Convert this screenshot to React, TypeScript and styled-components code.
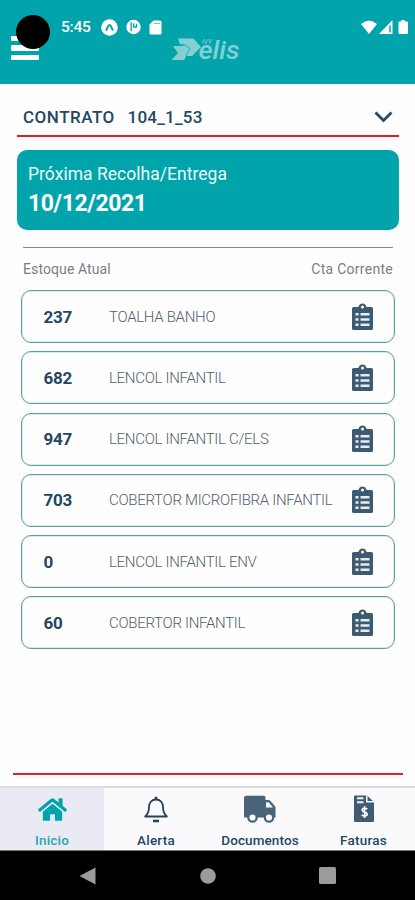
import React from "react";
import styled, { createGlobalStyle } from "styled-components";
import { FaHome } from "react-icons/fa";

const teal = "#02a4ac";
const navy = "#234762";

const GlobalStyle = createGlobalStyle`
  * { box-sizing: border-box; }
  body { margin: 0; background: #fff; font-family: Roboto, "Liberation Sans", sans-serif; }
  svg { display: block; flex: none; }
`;

const Screen = styled.div`
  width: 415px;
  height: 900px;
  display: flex;
  flex-direction: column;
  background: #fefefe;
  overflow: hidden;
`;

const Header = styled.header`
  position: relative;
  height: 84px;
  background: ${teal};
  flex: none;
`;

const CameraHole = styled.span`
  position: absolute;
  left: 16px;
  top: 15px;
  width: 34px;
  height: 34px;
  border-radius: 50%;
  background: #000;
`;

const StatusBar = styled.div`
  height: 36px;
  display: flex;
  align-items: center;
  padding: 18px 5px 0 61px;
`;

const Clock = styled.span`
  width: 40px;
  color: #fff;
  font-size: 15.5px;
  line-height: 18px;
  font-weight: 500;
  letter-spacing: -0.2px;
`;

const StatusIcons = styled.div`
  display: flex;
  align-items: center;
  gap: 8px;
  flex: 1;
`;

const SignalIcons = styled.div`
  display: flex;
  align-items: center;
  gap: 2px;
`;

const AppBar = styled.div`
  height: 48px;
  display: flex;
  padding-left: 11px;
`;

const MenuButton = styled.div`
  display: flex;
  flex-direction: column;
  gap: 4px;
  width: 160px;
`;

const MenuBar = styled.span`
  width: 28px;
  height: 5.4px;
  border-radius: 1px;
  background: #fff;
`;

const Content = styled.main`
  flex: 1;
  display: flex;
  flex-direction: column;
`;

const ContractSelect = styled.div`
  height: 53px;
  margin: 0 16px 0 17px;
  padding: 15px 6px 0 6px;
  border-bottom: 2px solid #e61f24;
  display: flex;
  align-items: center;
  color: ${navy};
`;

const ContractText = styled.span<{ $w: number; $ls: number }>`
  width: ${(p) => p.$w}px;
  white-space: nowrap;
  font-size: 17px;
  line-height: 20px;
  font-weight: 500;
  letter-spacing: ${(p) => p.$ls}px;
`;

const Card = styled.section`
  height: 80px;
  margin: 13px 16px 0 17px;
  padding: 13px 11px;
  border-radius: 10px;
  background: ${teal};
  color: #fff;
`;

const CardLabel = styled.div`
  font-size: 17.5px;
  line-height: 22px;
  color: #e9fafa;
  letter-spacing: 0.03px;
`;

const CardDate = styled.div`
  margin-top: 5px;
  font-size: 23px;
  line-height: 28px;
  font-weight: 700;
  letter-spacing: -0.4px;
`;

const Columns = styled.div`
  height: 43px;
  margin: 17px 22px 0 23px;
  padding-top: 11px;
  border-top: 1px solid #85898d;
  display: flex;
  justify-content: space-between;
  font-size: 14px;
  line-height: 20px;
  color: #788086;
`;

const ColumnTitle = styled.span<{ $ls: number }>`
  letter-spacing: ${(p) => p.$ls}px;
`;

const List = styled.div`
  display: flex;
  flex-direction: column;
  gap: 8.3px;
  padding: 0 20px 0 21px;
`;

const Row = styled.div`
  height: 53px;
  display: flex;
  align-items: center;
  padding: 0 21px 0 21.5px;
  border: 1px solid #5c9fa0;
  border-radius: 10px;
  box-shadow: inset 0 0 0 1px #dcebeb;
`;

const Quantity = styled.span`
  width: 65.5px;
  font-size: 17px;
  font-weight: 700;
  color: ${navy};
  letter-spacing: -0.25px;
`;

const ItemName = styled.span`
  flex: 1;
  white-space: nowrap;
  font-size: 15px;
  font-weight: 300;
  color: #51606c;
  letter-spacing: -0.3px;
`;

const Divider = styled.div`
  height: 2px;
  margin: auto 12px 11px 13px;
  background: #e02226;
`;

const Tabs = styled.nav`
  height: 65px;
  display: grid;
  grid-template-columns: 104px 104px 104px 103px;
  border-top: 2px solid #dcdcde;
  border-bottom: 1px solid #777;
  background: #fafafd;
  flex: none;
`;

const Tab = styled.div<{ $active?: boolean }>`
  display: flex;
  flex-direction: column;
  align-items: center;
  padding-top: 6px;
  background: ${(p) => (p.$active ? "#eaeaf4" : "transparent")};
  color: ${(p) => (p.$active ? teal : "#44617a")};
`;

const TabIcon = styled.span`
  height: 30px;
  display: flex;
  align-items: center;
`;

const TabLabel = styled.span<{ $active?: boolean; $ls: number }>`
  margin-top: 7px;
  font-size: 13.5px;
  line-height: 18px;
  font-weight: 500;
  white-space: nowrap;
  color: ${(p) => (p.$active ? "#2ba5ad" : navy)};
  letter-spacing: ${(p) => p.$ls}px;
`;

const SystemNav = styled.div`
  height: 49px;
  background: #000;
  display: flex;
  justify-content: space-between;
  align-items: center;
  padding: 0 79px;
  flex: none;
`;

const Logo = () => (
  <svg width="72" height="28" viewBox="0 0 72 28" fill="#83d0d4">
    <path d="M7 2.500h15.500L30 11l-9 9h-6l4-7-5-4.500H9z" />
    <path d="M2 10h9l3-1.500 5.500 4.500-6.500 11H.5L7 17z" />
    <path d="M9 9h5.500l4.500 4.200-4.500 7" fill="none" stroke={teal} strokeWidth=".8" />
    <text x="27.500" y="23" fontSize="25" fontWeight="500" fontStyle="italic" fontFamily="Roboto" textLength="41" lengthAdjust="spacingAndGlyphs">elis</text>
    <text x="31" y="8" fontSize="8" fontFamily="Roboto" fontStyle="italic" fill="#74cbcf">NY</text>
  </svg>
);

const ExpoIcon = () => (
  <svg width="17" height="17" viewBox="0 0 17 17">
    <circle cx="8.5" cy="8.5" r="8.3" fill="#fff" />
    <path d="M5 11.500C6.500 9.500 7 6 8.500 6S10.500 9.500 12 11.500" fill="none" stroke={teal} strokeWidth="2" />
  </svg>
);

const ParkIcon = () => (
  <svg width="15" height="16" viewBox="0 0 16 16">
    <circle cx="8" cy="8" r="7.7" fill="#fff" />
    <path d="M5.500 3v9.500M8.200 4v4.500M8.200 8h3V4.500" fill="none" stroke={teal} strokeWidth="1.400" />
  </svg>
);

const SdIcon = () => (
  <svg width="13" height="15" viewBox="0 0 13 15">
    <path d="M4.500 .5H11q1.500 0 1.500 1.500v11q0 1.500-1.500 1.500H2Q.5 14.500 .5 13V4.500z" fill="#fff" />
    <path d="M5 3.500h6" stroke={teal} strokeWidth="1" opacity=".6" />
  </svg>
);

const ClipboardIcon = () => (
  <svg width="21" height="28" viewBox="0 0 21 28">
    <path d="M1.500 4H6C7 4 7 .5 10.500 .5S14 4 15 4h4.500q1.500 0 1.500 1.500V25.500q0 1.500-1.500 1.500H1.500q-1.500 0-1.500-1.500V5.500Q0 4 1.500 4z" fill="#3c5a71" />
    <circle cx="10.500" cy="4" r="1.500" fill="#fff" />
    <path d="M3.500 11.300h3M3.500 16.500h3M3.500 21.700h3M8.500 11.300h9M8.500 16.500h9M8.500 21.700h9" stroke="#e6ecef" strokeWidth="2.400" />
  </svg>
);

const BellIcon = () => (
  <svg width="24" height="27" viewBox="0 0 24 27" fill="none" stroke="#24415c" strokeWidth="1.800">
    <path d="M1.200 20.500C4.500 17.500 5 15 5 11c0-4.500 2.800-7.500 7-7.500s7 3 7 7.500c0 4 .5 6.500 3.800 9.500z" strokeLinejoin="round" />
    <path d="M12 .8v2.500M9 25h6" strokeWidth="2.600" />
  </svg>
);

const TruckIcon = () => (
  <svg width="32" height="28" viewBox="0 0 32 28" fill="#48637a">
    <path d="M2 .8h18q1.500 0 1.500 1.500V5h3q1 0 1.800.8l4.500 5.200q.7.800.7 1.800V22.500H0V2.800q0-2 2-2z" />
    <path d="M22 7.200h2.700l4.300 5.300h-7z" fill="#fafafd" />
    <g stroke="#48637a" strokeWidth="2.200" fill="#fafafd">
      <circle cx="8.500" cy="22.500" r="4.200" />
      <circle cx="25" cy="22.500" r="4.200" />
    </g>
  </svg>
);

const InvoiceIcon = () => (
  <svg width="20" height="28" viewBox="0 0 20 28">
    <path d="M1 .5h12L20 7v19q0 1-1 1H1q-1 0-1-1V1.500Q0 .5 1 .5z" fill="#3f5c74" />
    <path d="M3 3.200h6.500M3 7.200h6.500" stroke="#eef1f5" strokeWidth="2" />
    <path d="M12.800 .5v6.200H20" fill="none" stroke="#fafafd" strokeWidth="1.500" />
    <path d="M13.200 14.300c-1-1.500-5-1.500-5 .8 0 2.600 5 1.400 5 4 0 2.300-4.200 2.300-5.400.6M10.600 11.300v11.700" fill="none" stroke="#fff" strokeWidth="1.700" />
  </svg>
);

const items: [string, string][] = [
  ["237", "TOALHA BANHO"],
  ["682", "LENCOL INFANTIL"],
  ["947", "LENCOL INFANTIL C/ELS"],
  ["703", "COBERTOR MICROFIBRA INFANTIL"],
  ["0", "LENCOL INFANTIL ENV"],
  ["60", "COBERTOR INFANTIL"],
];

export default function App() {
  return (
    <Screen>
      <GlobalStyle />
      <Header>
        <StatusBar>
          <Clock>5:45</Clock>
          <StatusIcons>
            <ExpoIcon />
            <ParkIcon />
            <SdIcon />
          </StatusIcons>
          <SignalIcons>
            <svg width="16" height="14" viewBox="0 0 16 14">
              <path d="M0 4Q8-3 16 4L8 14z" fill="#fff" />
            </svg>
            <svg width="15" height="14" viewBox="0 0 15 14">
              <path d="M13.500 0v14H0z" fill="#fff" />
              <path d="M11 5.500v7" stroke={teal} strokeWidth="1.500" />
            </svg>
            <svg width="14" height="14" viewBox="0 0 14 14">
              <path d="M5 0h4v1.500h2q1 0 1 1V13q0 1-1 1H3.500q-1 0-1-1V2.500q0-1 1-1H5z" fill="#fff" />
            </svg>
          </SignalIcons>
        </StatusBar>
        <AppBar>
          <MenuButton>
            <MenuBar />
            <MenuBar />
            <MenuBar />
          </MenuButton>
          <Logo />
        </AppBar>
        <CameraHole />
      </Header>
      <Content>
        <ContractSelect>
          <ContractText $w={104.5} $ls={0.5}>CONTRATO</ContractText>
          <ContractText $w={246.5} $ls={0.25}>104_1_53</ContractText>
          <svg width="19" height="12" viewBox="0 0 19 12">
            <path d="M1.500 1.500l8 8 8-8" fill="none" stroke="#2b4a62" strokeWidth="2.800" />
          </svg>
        </ContractSelect>
        <Card>
          <CardLabel>Próxima Recolha/Entrega</CardLabel>
          <CardDate>10/12/2021</CardDate>
        </Card>
        <Columns>
          <ColumnTitle $ls={0.1}>Estoque Atual</ColumnTitle>
          <ColumnTitle $ls={0.27}>Cta Corrente</ColumnTitle>
        </Columns>
        <List>
          {items.map(([qty, name]) => (
            <Row key={name}>
              <Quantity>{qty}</Quantity>
              <ItemName>{name}</ItemName>
              <ClipboardIcon />
            </Row>
          ))}
        </List>
        <Divider />
      </Content>
      <Tabs>
        <Tab $active>
          <TabIcon><FaHome size={29} /></TabIcon>
          <TabLabel $active $ls={0.2}>Inicio</TabLabel>
        </Tab>
        <Tab>
          <TabIcon><BellIcon /></TabIcon>
          <TabLabel $ls={0.25}>Alerta</TabLabel>
        </Tab>
        <Tab>
          <TabIcon><TruckIcon /></TabIcon>
          <TabLabel $ls={0.1}>Documentos</TabLabel>
        </Tab>
        <Tab>
          <TabIcon><InvoiceIcon /></TabIcon>
          <TabLabel $ls={0.25}>Faturas</TabLabel>
        </Tab>
      </Tabs>
      <SystemNav>
        <svg width="17" height="18" viewBox="0 0 17 18"><path d="M16.500 .5v17L.5 9z" fill="#9b9b9b" /></svg>
        <svg width="16" height="16" viewBox="0 0 16 16"><circle cx="8" cy="8" r="7.800" fill="#9b9b9b" /></svg>
        <svg width="17" height="17" viewBox="0 0 17 17"><rect width="17" height="17" rx="1.500" fill="#9b9b9b" /></svg>
      </SystemNav>
    </Screen>
  );
}
